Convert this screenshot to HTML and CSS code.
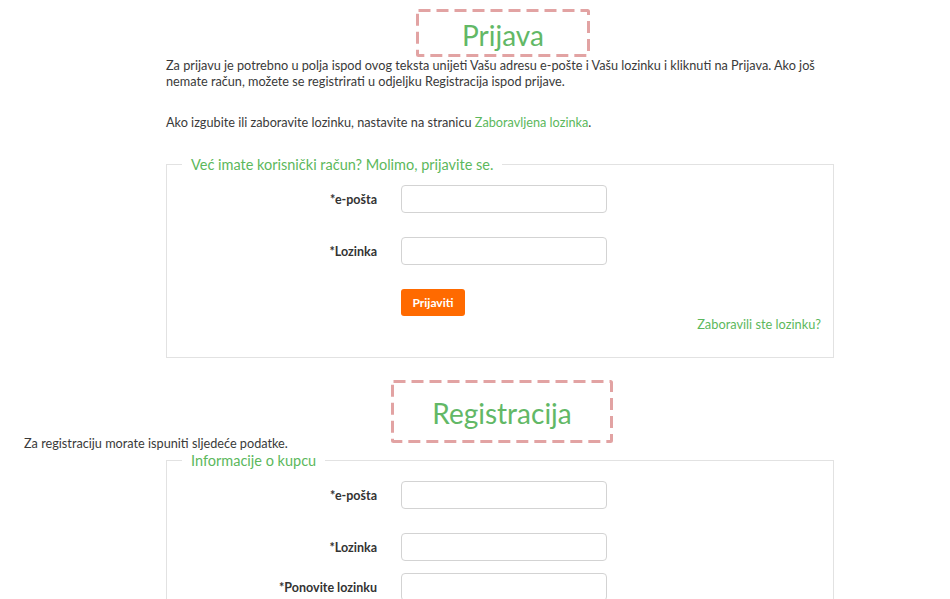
FILE: index.html
```html
<!DOCTYPE html>
<html lang="hr">
<head>
<meta charset="utf-8">
<title>Prijava</title>
<link rel="stylesheet" href="styles.css">
</head>
<body>
<div class="page">
  <section class="wrap">
    <div class="title title-login">
      <h1>Prijava</h1>
      <svg class="mark" width="174" height="48" aria-hidden="true"><rect x="1.5" y="1.5" width="171" height="45" rx="1"/></svg>
    </div>
    <p class="intro">Za prijavu je potrebno u polja ispod ovog teksta unijeti Vašu adresu e-pošte i Vašu lozinku i kliknuti na Prijava. Ako još nemate račun, možete se registrirati u odjeljku Registracija ispod prijave.</p>
    <p class="intro intro-second">Ako izgubite ili zaboravite lozinku, nastavite na stranicu <a href="#">Zaboravljena lozinka</a>.</p>
    <fieldset class="box box-login">
      <legend>Već imate korisnički račun? Molimo, prijavite se.</legend>
      <div class="row"><label>*e-pošta</label><input type="text"></div>
      <div class="row"><label>*Lozinka</label><input type="password"></div>
      <div class="actions"><button type="button">Prijaviti</button></div>
      <div class="forgot"><a href="#">Zaboravili ste lozinku?</a></div>
    </fieldset>
  </section>

  <div class="title title-reg">
    <h2>Registracija</h2>
    <svg class="mark" width="222" height="63" aria-hidden="true"><rect x="1.5" y="1.5" width="219" height="60" rx="1"/></svg>
  </div>
  <p class="reg-intro">Za registraciju morate ispuniti sljedeće podatke.</p>
  <section class="wrap">
    <fieldset class="box box-reg">
      <legend>Informacije o kupcu</legend>
      <div class="row"><label>*e-pošta</label><input type="text"></div>
      <div class="row row-tight"><label>*Lozinka</label><input type="password"></div>
      <div class="row"><label>*Ponovite lozinku</label><input type="password"></div>
    </fieldset>
  </section>
</div>
</body>
</html>
```

FILE: styles.css
```css
* { box-sizing: border-box; }

html, body {
  margin: 0;
  background: #ffffff;
}

body {
  font-family: Lato, "Open Sans", Arial, sans-serif;
  font-size: 12.7px;
  color: #3a3a3a;
  overflow: hidden;
}

a {
  color: #5cb85c;
  text-decoration: none;
}

.page {
  padding: 20px 0 0 24px;
}

.wrap {
  margin-left: 142px;
  width: 668px;
}

.title {
  position: relative;
  height: 30px;
}

.title h1,
.title h2 {
  margin: 0;
  font-weight: 400;
  font-size: 28px;
  line-height: 30px;
  color: #62b866;
  text-align: center;
}

.title-login {
  width: 174px;
  margin-left: 250px;
}

.title-login .mark {
  top: -11px;
}

.title-reg {
  width: 222px;
  margin-left: 367px;
  margin-top: 40px;
}

.title-reg .mark {
  top: -18px;
}

.mark {
  position: absolute;
  left: 0;
  pointer-events: none;
}

.mark rect {
  fill: none;
  stroke: #e2a3a3;
  stroke-width: 3;
  stroke-dasharray: 12 6;
}

.intro {
  margin: 7px 0 0;
  line-height: 16px;
}

.intro-second {
  margin-top: 25px;
}

.reg-intro {
  margin: 7px 0 0;
  line-height: 16px;
}

.box {
  margin: 0;
  border: 1px solid #e2e2e2;
  padding: 12px 0 0;
  min-width: 0;
}

.box legend {
  margin-left: 15px;
  padding: 0 9px;
  font-size: 14.5px;
  line-height: 17px;
  color: #5cb85c;
}

.box-login {
  margin-top: 26px;
  padding-bottom: 25px;
}

.box-reg {
  margin-top: 1px;
  padding-bottom: 20px;
}

.row {
  display: flex;
  align-items: center;
  gap: 24px;
  margin-bottom: 24px;
}

.row-tight {
  margin-bottom: 12px;
}

.row label {
  width: 210px;
  text-align: right;
  font-weight: 700;
  font-size: 12.5px;
  color: #333333;
}

.row input {
  width: 206px;
  height: 28px;
  border: 1px solid #d3d3d3;
  border-radius: 4px;
  background: #ffffff;
  padding: 0 8px;
  margin: 0;
  font: inherit;
}

.actions {
  margin-top: 25px;
  padding-left: 234px;
}

.actions button {
  width: 64px;
  height: 27px;
  border: 0;
  border-radius: 3px;
  background: #ff6a00;
  color: #ffffff;
  font-family: inherit;
  font-weight: 700;
  font-size: 12px;
  padding: 0;
}

.row + .actions {
  margin-top: 1px;
}

.forgot {
  text-align: right;
  padding-right: 12px;
  line-height: 16px;
  font-size: 12.8px;
}
```
